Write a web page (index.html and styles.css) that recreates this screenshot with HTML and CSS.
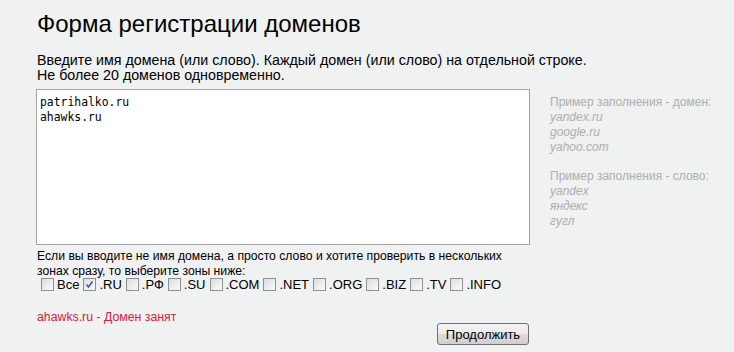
FILE: index.html
```html
<!DOCTYPE html>
<html lang="ru">
<head>
<meta charset="utf-8">
<title>Форма регистрации доменов</title>
<link rel="stylesheet" href="styles.css">
</head>
<body>
<div class="page">
  <h1 class="title">Форма регистрации доменов</h1>
  <p class="intro">Введите имя домена (или слово). Каждый домен (или слово) на отдельной строке.<br>Не более 20 доменов одновременно.</p>
  <div class="main">
    <div class="left">
      <textarea class="domains">patrihalko.ru
ahawks.ru</textarea>
      <p class="zones-note">Если вы вводите не имя домена, а просто слово и хотите проверить в нескольких<br>зонах сразу, то выберите зоны ниже:</p>
      <div class="zones">
        <label class="zone"><span class="cb"></span>Все</label>
        <label class="zone"><span class="cb checked"><svg viewBox="0 0 13 13" width="13" height="13"><path d="M3.5 6.5 L5.5 9 L9.5 3.5" fill="none" stroke="#3c5aa0" stroke-width="1.6"/></svg></span>.RU</label>
        <label class="zone"><span class="cb"></span>.РФ</label>
        <label class="zone"><span class="cb"></span>.SU</label>
        <label class="zone"><span class="cb"></span>.COM</label>
        <label class="zone"><span class="cb"></span>.NET</label>
        <label class="zone"><span class="cb"></span>.ORG</label>
        <label class="zone"><span class="cb"></span>.BIZ</label>
        <label class="zone"><span class="cb"></span>.TV</label>
        <label class="zone"><span class="cb"></span>.INFO</label>
      </div>
      <p class="status">ahawks.ru - Домен занят</p>
      <div class="actions"><button class="btn" type="button">Продолжить</button></div>
    </div>
    <div class="hints">
      <div class="hint-head">Пример заполнения - домен:</div>
      <div class="hint-item">yandex.ru</div>
      <div class="hint-item">google.ru</div>
      <div class="hint-item">yahoo.com</div>
      <div class="hint-gap"></div>
      <div class="hint-head">Пример заполнения - слово:</div>
      <div class="hint-item">yandex</div>
      <div class="hint-item">яндекс</div>
      <div class="hint-item">гугл</div>
    </div>
  </div>
</div>
</body>
</html>
```
FILE: styles.css
```css
html, body {
  margin: 0;
  padding: 0;
  background: #f0f1f1;
  font-family: "Liberation Sans", Arial, sans-serif;
  color: #000;
}
.page {
  padding: 10px 0 0 37px;
}
.title {
  font-size: 24px;
  font-weight: normal;
  margin: 0;
  line-height: 28px;
}
.intro {
  font-size: 14.25px;
  line-height: 15px;
  margin: 15px 0 6px 0;
}
.main {
  display: flex;
  align-items: flex-start;
}
.left {
  width: 494px;
  display: flex;
  flex-direction: column;
}
.domains {
  display: block;
  box-sizing: border-box;
  width: 494px;
  height: 156px;
  margin: 0 0 0 -1px;
  border: 1px solid #a5a5a5;
  background: #fff;
  font-family: "DejaVu Sans Mono", "Liberation Mono", monospace;
  font-size: 11.4px;
  line-height: 15px;
  padding: 5px 3px;
  resize: none;
  color: #000;
}
.zones-note {
  font-size: 12.2px;
  line-height: 15px;
  margin: 4px 0 0 0;
}
.zones {
  display: flex;
  align-items: center;
  gap: 4px;
  padding-left: 4px;
  font-size: 13px;
  height: 14px;
  margin-top: -2px;
}
.zone {
  display: flex;
  align-items: center;
  gap: 3px;
}
.cb {
  display: inline-block;
  width: 13px;
  height: 13px;
  box-sizing: border-box;
  border: 1px solid #8e8f8f;
  background: linear-gradient(135deg, #dcdcdc, #fbfbfb);
}
.cb svg { display: block; margin: -1px; }
.status {
  color: #d4233b;
  font-size: 12.3px;
  line-height: 15px;
  margin: 19px 0 0 0;
}
.actions {
  display: flex;
  justify-content: flex-end;
  margin-top: -2px;
  padding-right: 2px;
}
.btn {
  font-family: "Liberation Sans", Arial, sans-serif;
  font-size: 13px;
  height: 22px;
  width: 92px;
  padding: 0;
  border: 1px solid #707070;
  border-radius: 3px;
  background: linear-gradient(#f2f2f2 0%, #ebebeb 50%, #dddddd 51%, #cfcfcf 100%);
  color: #000;
}
.hints {
  margin-left: 19px;
  padding-top: 6px;
  font-size: 12px;
  line-height: 15px;
  color: #aeaeae;
}
.hint-item { font-style: italic; }
.hint-gap { height: 14px; }
```
